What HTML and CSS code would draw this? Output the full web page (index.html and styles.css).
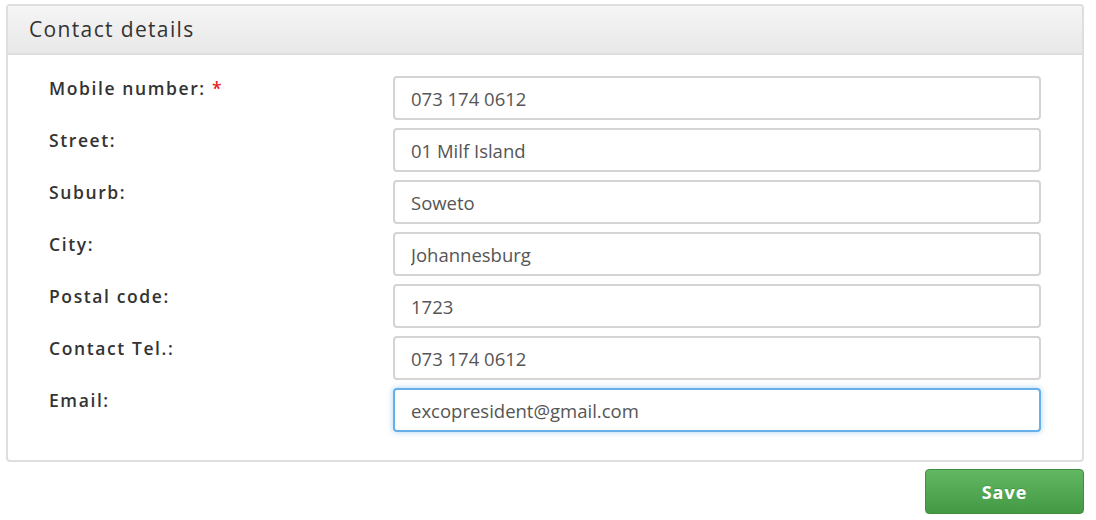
FILE: index.html
```html
<!DOCTYPE html>
<html>
<head>
<meta charset="utf-8">
<link rel="stylesheet" href="styles.css">
</head>
<body>
<div class="page">
  <div class="panel">
    <div class="panel-head">Contact details</div>
    <form class="panel-body">
      <label class="lbl">Mobile number: <span class="req">*</span></label>
      <input class="field" type="text" value="073 174 0612">
      <label class="lbl">Street:</label>
      <input class="field" type="text" value="01 Milf Island">
      <label class="lbl">Suburb:</label>
      <input class="field" type="text" value="Soweto">
      <label class="lbl">City:</label>
      <input class="field" type="text" value="Johannesburg">
      <label class="lbl">Postal code:</label>
      <input class="field" type="text" value="1723">
      <label class="lbl">Contact Tel.:</label>
      <input class="field" type="text" value="073 174 0612">
      <label class="lbl">Email:</label>
      <input class="field focus" type="text" value="excopresident@gmail.com">
    </form>
  </div>
  <div class="actions">
    <button class="btn-save" type="button">Save</button>
  </div>
</div>
</body>
</html>
```

FILE: styles.css
```css
html, body {
  margin: 0;
  padding: 0;
  background: #fff;
}
body {
  font-family: "Open Sans", "DejaVu Sans", sans-serif;
  color: #333;
}
.page {
  padding: 4px 12px 0 6px;
}
.panel {
  border: 2px solid #dedede;
  border-radius: 4px;
  background: #fff;
}
.panel-head {
  height: 49px;
  box-sizing: border-box;
  border-bottom: 2px solid #dedede;
  background: linear-gradient(#f5f5f5, #e8e8e8);
  padding: 8px 0 0 21px;
  font-size: 21px;
  line-height: 30px;
  letter-spacing: 1.35px;
  color: #333;
  border-radius: 3px 3px 0 0;
}
.panel-body {
  display: grid;
  grid-template-columns: 344px 1fr;
  row-gap: 8px;
  padding: 21px 41px 28px 41px;
  margin: 0;
}
.lbl {
  font-weight: 600;
  font-size: 17.5px;
  letter-spacing: 1.6px;
  line-height: 22px;
  padding-top: 1px;
  color: #333;
}
.req {
  color: #e8202a;
}
.field {
  height: 44px;
  box-sizing: border-box;
  border: 2px solid #d4d4d4;
  border-radius: 4px;
  padding: 0 16px;
  font-family: "Open Sans", "DejaVu Sans", sans-serif;
  font-size: 18.5px;
  color: #555;
  background: #fff;
  outline: none;
  width: 100%;
}
.field.focus {
  border-color: #66afe9;
  box-shadow: 0 0 6px rgba(102, 175, 233, 0.55);
}
.actions {
  display: flex;
  justify-content: flex-end;
  padding-top: 7px;
}
.btn-save {
  width: 159px;
  height: 45px;
  border: 1px solid #3f8c3f;
  border-radius: 4px;
  background: linear-gradient(#62b862, #449a44);
  color: #fff;
  font-family: "Open Sans", "DejaVu Sans", sans-serif;
  font-weight: bold;
  font-size: 18px;
  letter-spacing: 1px;
  text-shadow: 0 -1px 0 rgba(0,0,0,0.15);
}
```
